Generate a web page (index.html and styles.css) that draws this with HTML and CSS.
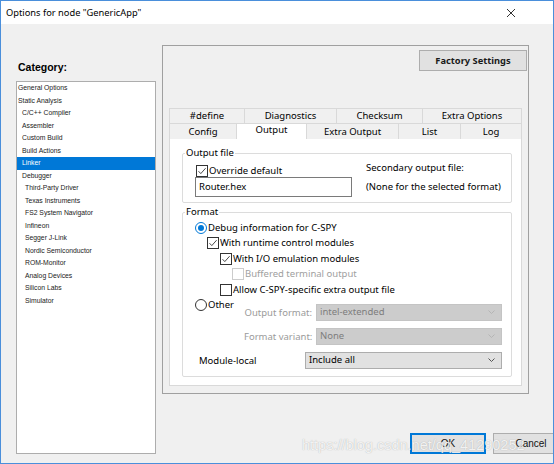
FILE: index.html
```html
<!DOCTYPE html>
<html>
<head>
<meta charset="utf-8">
<title>Options for node "GenericApp"</title>
<link rel="stylesheet" href="styles.css">
</head>
<body>
<div class="window">
  <div class="titlebar">
    <span class="title">Options for node "GenericApp"</span>
    <svg class="close" width="10" height="10" viewBox="0 0 10 10"><path d="M1 1L9 9M9 1L1 9" stroke="#333" stroke-width="1" fill="none"/></svg>
  </div>
  <div class="body">
    <div class="left">
      <div class="cat-label">Category:</div>
      <ul class="cat-list">
        <li class="l0">General Options</li>
        <li class="l0">Static Analysis</li>
        <li class="l1">C/C++ Compiler</li>
        <li class="l1">Assembler</li>
        <li class="l1">Custom Build</li>
        <li class="l1">Build Actions</li>
        <li class="l1 sel">Linker</li>
        <li class="l1">Debugger</li>
        <li class="l2">Third-Party Driver</li>
        <li class="l2">Texas Instruments</li>
        <li class="l2">FS2 System Navigator</li>
        <li class="l2">Infineon</li>
        <li class="l2">Segger J-Link</li>
        <li class="l2">Nordic Semiconductor</li>
        <li class="l2">ROM-Monitor</li>
        <li class="l2">Analog Devices</li>
        <li class="l2">Silicon Labs</li>
        <li class="l2">Simulator</li>
      </ul>
    </div>
    <div class="right">
      <div class="panel">
        <div class="panel-top"><div class="btn factory">Factory Settings</div></div>
        <div class="tabs">
          <div class="tabrow row1">
            <div class="tab w75">#define</div>
            <div class="tab w92">Diagnostics</div>
            <div class="tab w86">Checksum</div>
            <div class="tab w100 last">Extra Options</div>
          </div>
          <div class="tabrow row2">
            <div class="tab w67">Config</div>
            <div class="tab w70 active">Output</div>
            <div class="tab w92">Extra Output</div>
            <div class="tab w62">List</div>
            <div class="tab w62 last">Log</div>
          </div>
        </div>
        <div class="tab-content">
          <fieldset class="group g-out">
            <legend>Output file</legend>
            <div class="out-grid">
              <label class="opt"><span class="cb checked"><svg viewBox="0 0 12 12"><path d="M2.5 6.2L4.8 8.6L9.6 3.2" stroke="#333" stroke-width="0.9" fill="none"/></svg></span>Override default</label>
              <div class="sec-label">Secondary output file:</div>
              <div class="textbox">Router.hex</div>
              <div class="sec-note">(None for the selected format)</div>
            </div>
          </fieldset>
          <fieldset class="group g-fmt">
            <legend>Format</legend>
            <label class="opt ind0"><span class="rb on"></span>Debug information for C-SPY</label>
            <label class="opt ind1"><span class="cb checked"><svg viewBox="0 0 12 12"><path d="M2.5 6.2L4.8 8.6L9.6 3.2" stroke="#333" stroke-width="0.9" fill="none"/></svg></span>With runtime control modules</label>
            <label class="opt ind2"><span class="cb checked"><svg viewBox="0 0 12 12"><path d="M2.5 6.2L4.8 8.6L9.6 3.2" stroke="#333" stroke-width="0.9" fill="none"/></svg></span>With I/O emulation modules</label>
            <label class="opt ind3 disabled"><span class="cb"></span>Buffered terminal output</label>
            <label class="opt ind2"><span class="cb"></span>Allow C-SPY-specific extra output file</label>
            <div class="other-row">
              <label class="opt other"><span class="rb"></span>Other</label>
              <div class="fmt-grid">
                <div class="dlabel">Output format:</div>
                <div class="select disabled"><span>intel-extended</span><svg width="7" height="4" viewBox="0 0 7 4"><path d="M0.5 0.5L3.5 3.5L6.5 0.5" stroke="#b5b5b5" fill="none"/></svg></div>
                <div class="dlabel">Format variant:</div>
                <div class="select disabled"><span>None</span><svg width="7" height="4" viewBox="0 0 7 4"><path d="M0.5 0.5L3.5 3.5L6.5 0.5" stroke="#b5b5b5" fill="none"/></svg></div>
              </div>
            </div>
            <div class="module-row">
              <div class="mlabel">Module-local</div>
              <div class="select enabled"><span>Include all</span><svg width="7" height="4" viewBox="0 0 7 4"><path d="M0.5 0.5L3.5 3.5L6.5 0.5" stroke="#555" fill="none"/></svg></div>
            </div>
          </fieldset>
        </div>
      </div>
      <div class="buttons">
        <div class="btn dlg ok">OK</div>
        <div class="btn dlg">Cancel</div>
      </div>
    </div>
  </div>
  <div class="watermark">https://blog.csdn.net/qq_41290252</div>
</div>
</body>
</html>
```
FILE: styles.css
```css
body {
  margin: 0;
}

.window {
  width: 554px;
  height: 464px;
  box-sizing: border-box;
  border: 1px solid #4a8fdb;
  background: #f0f0f0;
  overflow: hidden;
  display: flex;
  flex-direction: column;
  position: relative;
  font-family: "Noto Sans", sans-serif;
  color: #000;
}

.titlebar {
  height: 23px;
  flex: none;
  background: #fff;
  display: flex;
  align-items: center;
  justify-content: space-between;
  padding: 0 37px 0 5px;
}

.title {
  font-size: 9.3px;
  line-height: 12px;
}

.close {
  display: block;
}

.body {
  flex: 1;
  display: flex;
}

.left {
  margin-left: 15px;
  width: 140px;
}

.cat-label {
  margin-top: 37px;
  padding-left: 2px;
  font-family: "Liberation Sans", Arial, sans-serif;
  font-weight: bold;
  font-size: 10.5px;
  line-height: 13px;
}

.cat-list {
  list-style: none;
  margin: 7px 0 0;
  padding: 0;
  height: 373px;
  box-sizing: border-box;
  border: 1px solid #adadad;
  background: #fff;
  font-family: "Liberation Sans", Arial, sans-serif;
  font-size: 6.8px;
  color: #1a1a1a;
}

.cat-list li {
  height: 12.5px;
  line-height: 12.5px;
  white-space: nowrap;
}

.cat-list .l0 { padding-left: 1px; }
.cat-list .l1 { padding-left: 5px; }
.cat-list .l2 { padding-left: 8px; }

.cat-list .sel {
  background: #0078d7;
  color: #fff;
}

.right {
  margin-left: 6px;
  width: 367px;
}

.panel {
  margin-top: 21px;
  height: 349px;
  box-sizing: border-box;
  border: 1px solid #a0a0a0;
  padding: 4px 6px 6px 6px;
  display: flex;
  flex-direction: column;
}

.panel-top {
  display: flex;
  justify-content: flex-end;
  margin-right: -5px;
}

.btn {
  box-sizing: border-box;
  background: #e1e1e1;
  border: 1px solid #adadad;
  display: flex;
  align-items: center;
  justify-content: center;
}

.factory {
  width: 108px;
  height: 21px;
  font-weight: bold;
  font-size: 9.3px;
  color: #1a1a1a;
}

.tabs {
  margin-top: 37px;
  font-size: 9.5px;
}

.tabrow {
  display: flex;
}

.row1 { height: 15px; }
.row2 { height: 16px; }

.tab {
  box-sizing: border-box;
  border-top: 1px solid #d9d9d9;
  border-left: 1px solid #d9d9d9;
  display: flex;
  align-items: center;
  justify-content: center;
  line-height: 12px;
  background: #f0f0f0;
}

.tab.last {
  border-right: 1px solid #d9d9d9;
}

.tab.active {
  background: #fff;
  align-items: flex-start;
  padding-top: 0;
}

.w62 { width: 62px; }
.w67 { width: 67px; }
.w70 { width: 70px; }
.w75 { width: 75px; }
.w86 { width: 86px; }
.w92 { width: 92px; }
.w100 { width: 100px; }

.tab-content {
  height: 247px;
  box-sizing: border-box;
  background: #fff;
  border: 1px solid #d9d9d9;
  border-top: none;
  padding: 0 9px 0 12px;
  font-size: 9.5px;
}

.group {
  margin: 0;
  padding: 0 8px 0 12px;
  border: 1px solid #dcdcdc;
  border-radius: 2px;
  min-width: 0;
}

.group legend {
  padding: 0 1px;
  margin-left: -10px;
  line-height: 14px;
  height: 14px;
}

.g-out {
  margin-top: 7px;
  padding-bottom: 5px;
}

.g-fmt {
  margin-top: 2px;
  padding-bottom: 7px;
}

.out-grid {
  display: grid;
  grid-template-columns: 157px 1fr;
  column-gap: 14px;
  grid-template-rows: 13px 20px;
  padding-top: 4px;
}

.opt {
  display: flex;
  align-items: center;
  height: 15.5px;
  line-height: 12px;
  white-space: nowrap;
}

.out-grid .opt {
  height: 13px;
  padding-left: 1px;
}

.sec-label {
  line-height: 13px;
  margin-top: -3px;
}

.sec-note {
  line-height: 20px;
}

.textbox {
  box-sizing: border-box;
  border: 1px solid #7a7a7a;
  height: 20px;
  line-height: 17px;
  padding-left: 3px;
}

.cb {
  box-sizing: border-box;
  width: 12px;
  height: 12px;
  border: 1px solid #333;
  background: #fff;
  margin-right: 1px;
  flex: none;
  position: relative;
}

.cb svg {
  position: absolute;
  left: -1px;
  top: -1px;
  width: 12px;
  height: 12px;
}

.rb {
  box-sizing: border-box;
  width: 12px;
  height: 12px;
  border: 1px solid #333;
  border-radius: 50%;
  background: #fff;
  margin-right: 1px;
  flex: none;
  display: flex;
  align-items: center;
  justify-content: center;
}

.rb.on {
  border-color: #0078d7;
}

.rb.on::after {
  content: "";
  width: 6px;
  height: 6px;
  border-radius: 50%;
  background: #0078d7;
}

.g-fmt > .ind0 { margin-top: 1px; }
.ind0 { padding-left: 0; }
.ind1 { padding-left: 12px; }
.ind2 { padding-left: 25px; }
.ind3 { padding-left: 37px; }

.opt.disabled {
  color: #a0a0a0;
}

.opt.disabled .cb {
  border-color: #cccccc;
}

.other-row {
  display: flex;
  align-items: flex-start;
}

.other {
  width: 49px;
}

.fmt-grid {
  display: grid;
  grid-template-columns: 68px 186px;
  column-gap: 4px;
  row-gap: 7px;
  margin-top: 6px;
  align-items: center;
}

.dlabel {
  text-align: right;
  color: #9a9a9a;
  white-space: nowrap;
}

.select {
  box-sizing: border-box;
  height: 17px;
  display: flex;
  align-items: center;
  justify-content: space-between;
  padding: 0 6px 0 3px;
  line-height: 12px;
}

.select.disabled {
  background: #cccccc;
  border: 1px solid #c4c4c4;
  color: #7d7d7d;
}

.select.enabled {
  background: #e1e1e1;
  border: 1px solid #adadad;
}

.module-row {
  display: flex;
  align-items: center;
  margin-top: 7px;
  padding-left: 4px;
}

.mlabel {
  width: 106px;
}

.module-row .select {
  width: 197px;
}

.buttons {
  display: flex;
  gap: 7px;
  margin-top: 39px;
  margin-left: 248px;
  width: 200px;
}

.dlg {
  width: 76px;
  height: 21px;
  flex: none;
  font-family: "Liberation Sans", Arial, sans-serif;
  font-size: 10px;
  color: #111;
}

.dlg.ok {
  border: 1px solid #0078d7;
  box-shadow: inset 0 0 0 1px #0078d7;
}

.watermark {
  position: absolute;
  left: 301px;
  top: 436px;
  font-family: "Liberation Sans", Arial, sans-serif;
  font-size: 14.5px;
  line-height: 17px;
  color: rgba(255, 255, 255, 0.85);
  text-shadow: 0 0 1px rgba(120, 120, 120, 0.6);
  white-space: nowrap;
  pointer-events: none;
}
```
